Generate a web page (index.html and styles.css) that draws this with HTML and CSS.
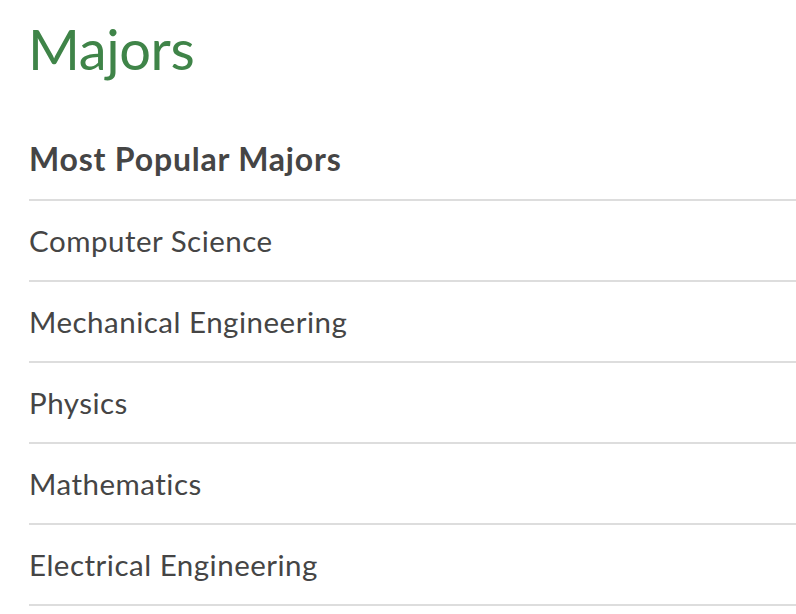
FILE: index.html
```html
<!DOCTYPE html>
<html lang="en">
<head>
<meta charset="utf-8">
<title>Majors</title>
<link rel="stylesheet" href="styles.css">
</head>
<body>
<main class="majors">
  <h1 class="majors-title">Majors</h1>
  <h2 class="majors-subtitle">Most Popular Majors</h2>
  <ul class="majors-list">
    <li class="majors-item">Computer Science</li>
    <li class="majors-item">Mechanical Engineering</li>
    <li class="majors-item">Physics</li>
    <li class="majors-item">Mathematics</li>
    <li class="majors-item">Electrical Engineering</li>
  </ul>
</main>
</body>
</html>
```
FILE: styles.css
```css
html, body {
  margin: 0;
  padding: 0;
  background: #ffffff;
}
body {
  font-family: Lato, "Noto Sans", sans-serif;
  color: #454545;
  overflow: hidden;
}
.majors {
  padding-left: 29px;
}
.majors-title {
  margin: 0 0 0 -1px;
  font-size: 56px;
  font-weight: 400;
  line-height: 98px;
  letter-spacing: -0.4px;
  color: #3f8448;
}
.majors-subtitle {
  margin: 0;
  padding: 41px 0 20px;
  font-size: 32px;
  font-weight: 700;
  line-height: 40px;
  letter-spacing: 0.8px;
  border-bottom: 2px solid #dddddd;
  color: #454545;
}
.majors-list {
  list-style: none;
  margin: 0;
  padding: 0;
}
.majors-item {
  height: 79px;
  line-height: 79px;
  font-size: 29.5px;
  letter-spacing: 0.5px;
  border-bottom: 2px solid #dddddd;
}
```
